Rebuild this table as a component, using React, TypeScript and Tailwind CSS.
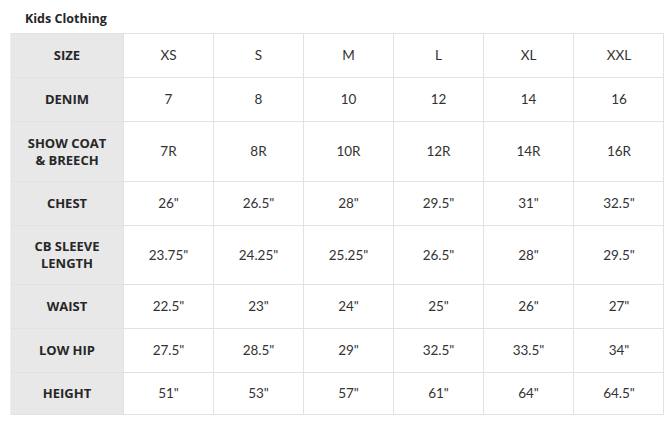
import React from 'react';

const sizes = ['XS', 'S', 'M', 'L', 'XL', 'XXL'];

const rows: { label: string[]; values: string[]; h: string }[] = [
    { label: ['DENIM'], values: ['7', '8', '10', '12', '14', '16'], h: 'h-[44px]' },
    { label: ['SHOW COAT', '& BREECH'], values: ['7R', '8R', '10R', '12R', '14R', '16R'], h: 'h-[60px]' },
    { label: ['CHEST'], values: ['26"', '26.5"', '28"', '29.5"', '31"', '32.5"'], h: 'h-[44px]' },
    { label: ['CB SLEEVE', 'LENGTH'], values: ['23.75"', '24.25"', '25.25"', '26.5"', '28"', '29.5"'], h: 'h-[59px]' },
    { label: ['WAIST'], values: ['22.5"', '23"', '24"', '25"', '26"', '27"'], h: 'h-[44px]' },
    { label: ['LOW HIP'], values: ['27.5"', '28.5"', '29"', '32.5"', '33.5"', '34"'], h: 'h-[44px]' },
    { label: ['HEIGHT'], values: ['51"', '53"', '57"', '61"', '64"', '64.5"'], h: 'h-[41px]' },
];

const Row: React.FC<{ label: string[]; values: string[]; h: string; last?: boolean }> = ({ label, values, h, last }) => (
    <div className={`flex ${h} ${last ? '' : 'border-b border-[#e2e2e2]'}`}>
        <div className="w-[113px] shrink-0 bg-[#e8e8e8] flex flex-col items-center justify-center font-['Open_Sans',sans-serif] text-[13px] font-bold text-[#262626] leading-[17px] border-r border-[#e2e2e2]">
            {label.map((l) => (
                <div key={l}>{l}</div>
            ))}
        </div>
        {values.map((v, i) => (
            <div
                key={i}
                className={`w-[90px] shrink-0 flex items-center justify-center text-[13.5px] text-[#333333] ${i < 5 ? 'border-r border-[#e2e2e2]' : ''}`}
            >
                {v}
            </div>
        ))}
    </div>
);

const App: React.FC = () => {
    return (
        <div className="w-[670px] h-[421px] bg-white font-['Lato',sans-serif]">
            <div className="pt-[10px] pl-[25px] h-[33px] font-['Open_Sans',sans-serif] text-[12.5px] font-bold text-[#262626]">
                Kids Clothing
            </div>
            <div className="ml-[10px] w-[654px] border border-[#e2e2e2] border-l-[#eeeeee]">
                <Row label={['SIZE']} values={sizes} h="h-[44px]" />
                {rows.map((r, i) => (
                    <Row key={r.label[0]} label={r.label} values={r.values} h={r.h} last={i === rows.length - 1} />
                ))}
            </div>
        </div>
    );
};

export default App;
